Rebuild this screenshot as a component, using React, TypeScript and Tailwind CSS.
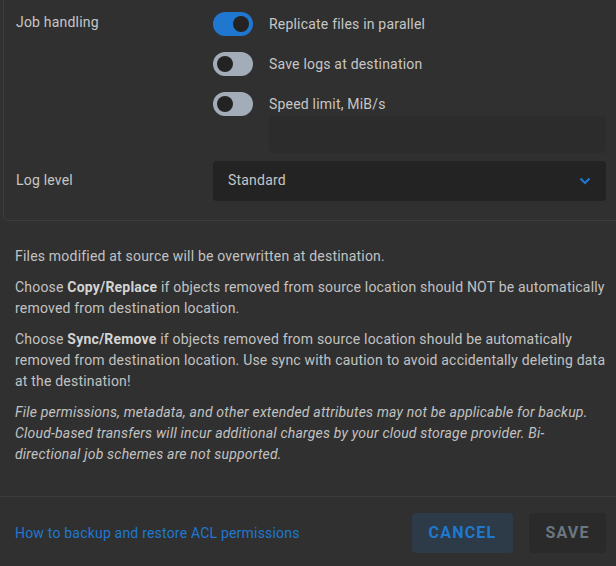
import React from "react";

type ToggleProps = {
    on?: boolean;
    label: string;
};

const Toggle = ({ on, label }: ToggleProps) => {
    return (
        <div className="flex items-center gap-4 h-6">
            <div className={`relative w-10 h-6 rounded-full shrink-0 ${on ? "bg-[#1f77d0]" : "bg-[#a3adb9]"}`}>
                <div className={`absolute top-1 w-4 h-4 rounded-full bg-[#232323] ${on ? "left-5" : "left-1"}`} />
            </div>
            <span className="text-[14px] tracking-[0.2px] text-[#c6c6c6]">{label}</span>
        </div>
    );
};

const App = () => {
    return (
        <div className="w-[616px] h-[566px] overflow-hidden bg-[#303030] font-['Roboto',sans-serif] flex flex-col">
            {/* settings card (top is scrolled off) */}
            <div className="ml-[3px] w-[640px] border border-t-0 border-[#3d3d3d] rounded-b-md pl-3 pt-3 pb-[19px]">
                <div className="grid grid-cols-[197px_393px]">
                    <div className="text-[14px] tracking-[0.2px] text-[#c6c6c6] leading-5">Job handling</div>
                    <div className="flex flex-col">
                        <div className="flex flex-col gap-4">
                            <Toggle on label="Replicate files in parallel" />
                            <Toggle label="Save logs at destination" />
                            <Toggle label="Speed limit, MiB/s" />
                        </div>
                        <div className="ml-14 h-[37px] rounded bg-[#2c2c2c]" />
                    </div>
                    <div className="text-[14px] tracking-[0.2px] text-[#c6c6c6] mt-2 flex items-center h-[38px]">Log level</div>
                    <div className="mt-2 h-10 rounded bg-[#232323] flex items-center justify-between pl-[15px] pr-[15px]">
                        <span className="text-[14px] tracking-[0.2px] text-[#c6c6c6] -mt-0.5">Standard</span>
                        <svg width="12" height="8" viewBox="0 0 12 8" fill="none">
                            <polyline points="1.5,1.5 6,6 10.5,1.5" stroke="#1f77d0" strokeWidth="2.2" />
                        </svg>
                    </div>
                </div>
            </div>

            {/* description */}
            <div className="pl-[15px] pr-[9px] mt-[25px] text-[14px] tracking-[0.2px] leading-[21px] text-[#c2c2c2] flex flex-col gap-[10px]">
                <p>Files modified at source will be overwritten at destination.</p>
                <p>
                    Choose <b className="font-bold text-[#d4d4d4]">Copy/Replace</b> if objects removed from source location should NOT be automatically removed from destination location.
                </p>
                <p>
                    Choose <b className="font-bold text-[#d4d4d4]">Sync/Remove</b> if objects removed from source location should be automatically removed from destination location. Use sync with caution to avoid accidentally deleting data at the destination!
                </p>
                <p className="italic pr-[6px]">
                    File permissions, metadata, and other extended attributes may not be applicable for backup. Cloud-based transfers will incur additional charges by your cloud storage provider. Bi-directional job schemes are not supported.
                </p>
            </div>

            {/* footer */}
            <div className="mt-auto border-t border-[#3b3b3b] pt-4 pb-[13px] pl-[15px] pr-[10px] flex items-center">
                <a className="text-[14px] tracking-[0.2px] text-[#1f78d0]">How to backup and restore ACL permissions</a>
                <div className="ml-auto flex gap-4">
                    <button className="h-10 w-[101px] rounded bg-[#2d3a47] text-[#1f78d0] text-[16px] font-bold tracking-[1.2px]">CANCEL</button>
                    <button className="h-10 w-[77px] rounded bg-[#2a2a2a] text-[#6b7682] text-[16px] font-bold tracking-[1.2px]">SAVE</button>
                </div>
            </div>
        </div>
    );
};

export default App;
